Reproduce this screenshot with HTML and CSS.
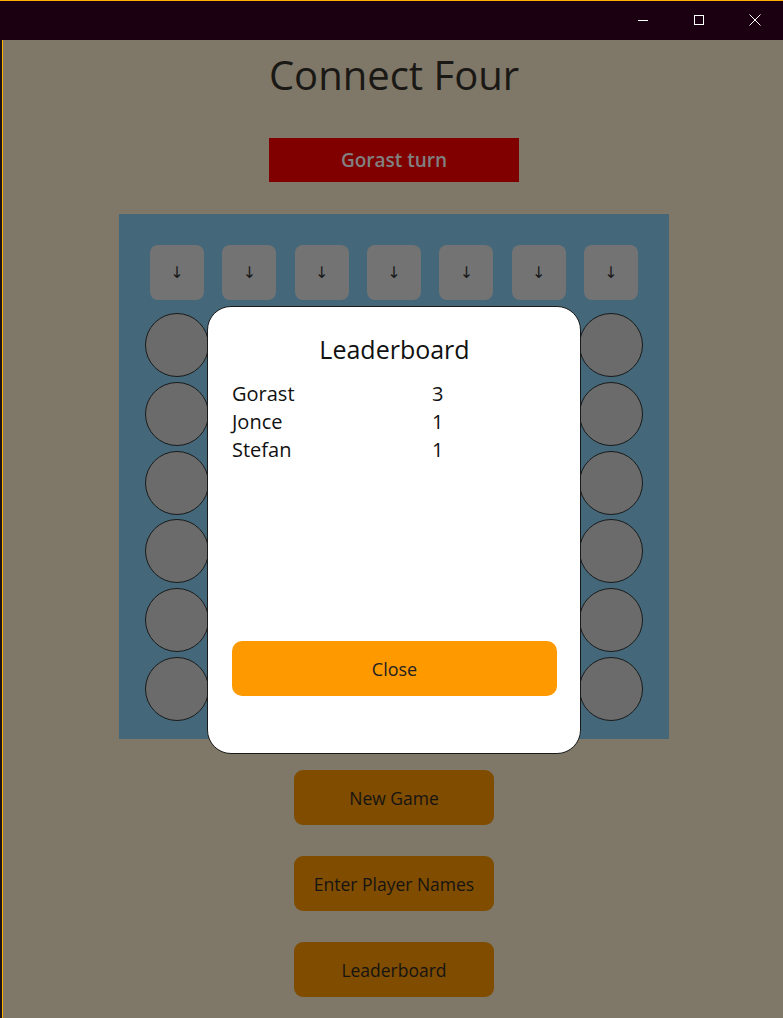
FILE: index.html
```html
<!DOCTYPE html>
<html>
<head>
<meta charset="utf-8">
<link rel="stylesheet" href="styles.css">
</head>
<body>
<div class="window">
  <div class="titlebar">
    <div class="winbtn">
      <svg width="12" height="12" viewBox="0 0 12 12"><path d="M1 6.5H11" stroke="#fff" stroke-width="1"/></svg>
    </div>
    <div class="winbtn">
      <svg width="12" height="12" viewBox="0 0 12 12"><rect x="1.5" y="1.5" width="9" height="9" fill="none" stroke="#fff" stroke-width="1"/></svg>
    </div>
    <div class="winbtn">
      <svg width="12" height="12" viewBox="0 0 12 12"><path d="M0.5 0.5L11.5 11.5M11.5 0.5L0.5 11.5" stroke="#fff" stroke-width="1"/></svg>
    </div>
  </div>
  <div class="app">
    <h1 class="title">Connect Four</h1>
    <div class="status">Gorast turn</div>
    <div class="board">
      <div class="drop">↓</div><div class="drop">↓</div><div class="drop">↓</div><div class="drop">↓</div><div class="drop">↓</div><div class="drop">↓</div><div class="drop">↓</div>
      <div class="cell"></div><div class="cell"></div><div class="cell"></div><div class="cell"></div><div class="cell"></div><div class="cell"></div><div class="cell"></div>
      <div class="cell"></div><div class="cell"></div><div class="cell"></div><div class="cell"></div><div class="cell"></div><div class="cell"></div><div class="cell"></div>
      <div class="cell"></div><div class="cell"></div><div class="cell"></div><div class="cell"></div><div class="cell"></div><div class="cell"></div><div class="cell"></div>
      <div class="cell"></div><div class="cell"></div><div class="cell"></div><div class="cell"></div><div class="cell"></div><div class="cell"></div><div class="cell"></div>
      <div class="cell"></div><div class="cell"></div><div class="cell"></div><div class="cell"></div><div class="cell"></div><div class="cell"></div><div class="cell"></div>
      <div class="cell"></div><div class="cell"></div><div class="cell"></div><div class="cell"></div><div class="cell"></div><div class="cell"></div><div class="cell"></div>
    </div>
    <div class="actions">
      <div class="action">New Game</div>
      <div class="action">Enter Player Names</div>
      <div class="action">Leaderboard</div>
    </div>
  </div>
  <div class="modal">
    <div class="modal-title">Leaderboard</div>
    <div class="scores">
      <span>Gorast</span><span>3</span>
      <span>Jonce</span><span>1</span>
      <span>Stefan</span><span>1</span>
    </div>
    <div class="close">Close</div>
  </div>
</div>
</body>
</html>
```
FILE: styles.css
```css
html, body {
  margin: 0;
  padding: 0;
}
body {
  background: #1c1418;
  padding-left: 2px;
  width: 783px;
  height: 1018px;
  box-sizing: border-box;
  overflow: hidden;
  font-family: "Open Sans", "Noto Sans", sans-serif;
}
.window {
  position: relative;
  height: 1018px;
  border-left: 1px solid #ffb000;
  background: #7f7767;
}
.titlebar {
  height: 39px;
  border-top: 1px solid #ffb000;
  background: #1a0010;
  display: flex;
  justify-content: flex-end;
  margin-left: -3px;
  padding-left: 3px;
}
.winbtn {
  width: 56px;
  height: 39px;
  display: flex;
  align-items: center;
  justify-content: center;
  margin-top: -1px;
}
.app {
  display: flex;
  flex-direction: column;
  align-items: center;
  padding-top: 10px;
  padding-left: 2px;
}
.title {
  margin: 0;
  font-weight: 400;
  font-size: 40px;
  line-height: 50px;
  color: #1a1815;
}
.status {
  margin-top: 38px;
  width: 250px;
  height: 44px;
  background: #800000;
  color: #808080;
  font-weight: 600;
  font-size: 19px;
  display: flex;
  align-items: center;
  justify-content: center;
}
.board {
  margin-top: 32px;
  width: 550px;
  height: 525px;
  box-sizing: border-box;
  background: #44687a;
  padding-top: 31px;
  display: grid;
  grid-template-columns: repeat(7, 64px);
  grid-template-rows: 63.2px repeat(6, 64px);
  column-gap: 8.33px;
  row-gap: 4.8px;
  justify-content: center;
  align-content: start;
}
.drop {
  justify-self: center;
  align-self: start;
  width: 54px;
  height: 55px;
  border-radius: 8px;
  background: #737373;
  color: #1a1a1a;
  font-size: 16px;
  font-family: "DejaVu Sans", sans-serif;
  display: flex;
  align-items: center;
  justify-content: center;
}
.cell {
  width: 64px;
  height: 64px;
  box-sizing: border-box;
  border-radius: 50%;
  border: 1px solid #1a1a1a;
  background: #6b6b6b;
}
.actions {
  margin-top: 31px;
  display: flex;
  flex-direction: column;
  gap: 31px;
}
.action {
  width: 200px;
  height: 55px;
  border-radius: 9px;
  background: #7f4c00;
  color: #161412;
  font-size: 17.5px;
  display: flex;
  align-items: center;
  justify-content: center;
}
.modal {
  position: absolute;
  left: 204px;
  top: 306px;
  width: 374px;
  height: 448px;
  box-sizing: border-box;
  background: #ffffff;
  border: 1px solid #1a1a1a;
  border-radius: 24px;
  padding: 24px 23px 57px 24px;
  display: flex;
  flex-direction: column;
}
.modal-title {
  text-align: center;
  font-size: 25px;
  line-height: 36px;
  color: #111;
}
.scores {
  margin-top: 13px;
  display: grid;
  grid-template-columns: 200px auto;
  font-size: 20px;
  line-height: 28px;
  color: #111;
}
.close {
  margin-top: auto;
  height: 55px;
  border-radius: 10px;
  background: #ff9900;
  color: #222;
  font-size: 18px;
  display: flex;
  align-items: center;
  justify-content: center;
}
```
